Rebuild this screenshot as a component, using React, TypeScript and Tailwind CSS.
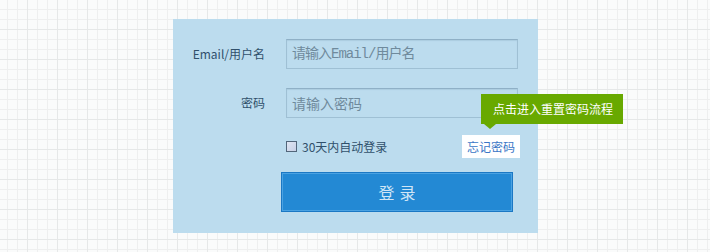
import React, { useState } from 'react';

const LoginPanel: React.FC = () => {
  const [remember, setRemember] = useState(false);

  return (
    <div className="ml-[173px] mt-[19px] w-[365px] bg-[#bcdcee] pt-[20px] pb-[21px]">
      {/* Email / 用户名 */}
      <div className="flex items-center">
        <label className="w-[92px] text-right text-[12px] text-[#30506b]">Email/用户名</label>
        <input
          type="text"
          placeholder="请输入Email/用户名"
          className="ml-[21px] h-[30px] w-[232px] border border-[#9fc0d4] border-t-[#8fb0c6] bg-[#bcdcee] px-[5px] text-[14px] text-[#30506b] outline-none placeholder:tracking-[-1px] placeholder:text-[#6f8a9c] shadow-[inset_0_1px_1px_rgba(80,120,150,0.15)]"
          style={{ fontFamily: '"Liberation Mono", "Noto Sans CJK SC", monospace' }}
        />
      </div>

      {/* 密码 */}
      <div className="mt-[19px] flex items-center">
        <label className="w-[92px] text-right text-[12px] text-[#30506b]">密码</label>
        <input
          type="password"
          placeholder="请输入密码"
          className="ml-[21px] h-[30px] w-[232px] border border-[#9fc0d4] border-t-[#8fb0c6] bg-[#bcdcee] px-[5px] text-[14px] text-[#30506b] outline-none placeholder:text-[#6f8a9c] shadow-[inset_0_1px_1px_rgba(80,120,150,0.15)]"
          style={{ fontFamily: '"Noto Sans CJK SC", sans-serif' }}
        />
      </div>

      {/* remember + forgot */}
      <div className="ml-[113px] mt-[17px] flex h-[23px] w-[234px] items-center justify-between">
        <label className="flex cursor-pointer items-center text-[12px] text-[#30506b]">
          <span
            onClick={() => setRemember(!remember)}
            className="h-[11px] w-[11px] border border-[#52667a] bg-gradient-to-br from-[#dfe6f2] to-[#c7d0e6]"
          >
            {remember && <span className="block h-full w-full bg-[#30506b]" />}
          </span>
          <span className="ml-[5px]">30天内自动登录</span>
        </label>

        <div className="relative">
          <a href="#" className="block h-[23px] bg-white px-[5px] text-[12px] leading-[23px] text-[#3a76c6]">
            忘记密码
          </a>
          {/* tooltip */}
          <div className="absolute left-[19px] top-[-41px] h-[30px] w-[142px] bg-[#68a900] pl-[12px] text-[12px] leading-[30px] text-white whitespace-nowrap">
            点击进入重置密码流程
            <span className="absolute left-[3px] top-[30px] h-0 w-0 border-l-[6px] border-r-[6px] border-t-[5px] border-l-transparent border-r-transparent border-t-[#68a900]" />
          </div>
        </div>
      </div>

      {/* login button */}
      <button className="ml-[108px] mt-[14px] flex h-[40px] w-[232px] items-center justify-center border border-[#1b78c4] bg-[#2389d4] text-[16px] tracking-[5px] text-[#cfe5f6] shadow-[inset_0_0_0_1px_#4aa2e2]">
        <span className="pl-[5px]">登录</span>
      </button>
    </div>
  );
};

export default function App() {
  return (
    <div
      className="h-[252px] w-[710px] overflow-hidden bg-[#fafbfb] bg-[linear-gradient(to_right,#e6e8e8_1px,transparent_1px),linear-gradient(to_bottom,#e6e8e8_1px,transparent_1px),linear-gradient(to_right,#eeefef_1px,transparent_1px),linear-gradient(to_bottom,#eeefef_1px,transparent_1px)] [background-size:30px_30px,30px_30px,10px_10px,10px_10px] [background-position:27px_0,0_29px,7px_0,0_9px] pt-px"
      style={{ fontFamily: '"Noto Sans CJK SC", "Noto Sans", sans-serif' }}
    >
      <div className="-mt-px">
        <LoginPanel />
      </div>
    </div>
  );
}
